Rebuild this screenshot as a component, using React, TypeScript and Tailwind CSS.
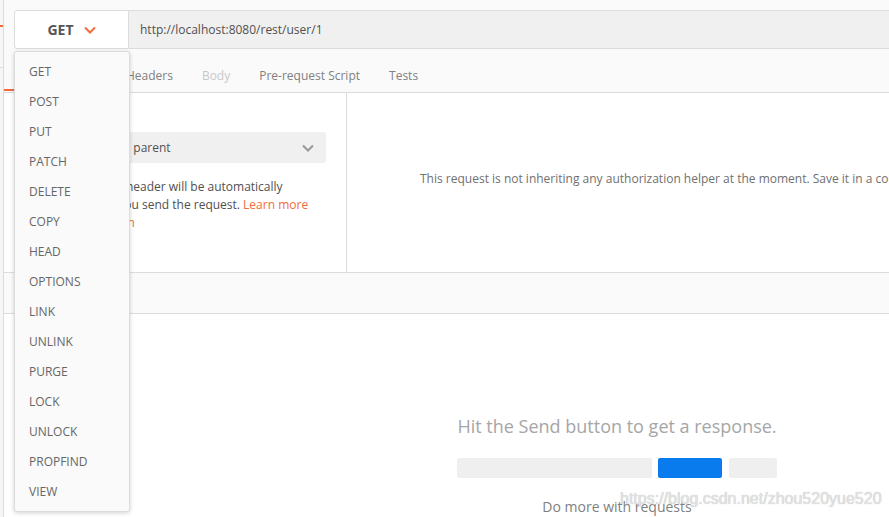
import React from "react";

const methods = [
  "GET",
  "POST",
  "PUT",
  "PATCH",
  "DELETE",
  "COPY",
  "HEAD",
  "OPTIONS",
  "LINK",
  "UNLINK",
  "PURGE",
  "LOCK",
  "UNLOCK",
  "PROPFIND",
  "VIEW",
];

function Chevron({ className = "" }: { className?: string }) {
  return (
    <svg className={className} viewBox="0 0 12 8" fill="none" stroke="currentColor" strokeWidth={2}>
      <path d="M1 1.5l5 5 5-5" />
    </svg>
  );
}

export default function App() {
  return (
    <div
      className="relative w-[889px] h-[517px] overflow-hidden bg-white flex text-[12px]"
      style={{ fontFamily: '"Open Sans", "Liberation Sans", sans-serif' }}
    >
      {/* left sidebar edge */}
      <div className="w-[4px] shrink-0 bg-[#f6f6f6] border-r border-[#dcdcdc] flex flex-col">
        <div className="mt-[25px] h-[2px] w-[3px] bg-[#f26b3a]" />
        <div className="mt-[40px] h-px w-[3px] bg-[#e0e0e0]" />
      </div>

      {/* main column */}
      <div className="flex-1 flex flex-col min-w-0">
        {/* url bar */}
        <div className="shrink-0 bg-[#fafafa] pt-[10px] pl-[10px] flex">
          <div className="w-[115px] h-[39px] shrink-0 bg-white border border-[#dcdcdc] rounded-l-[3px] flex items-center justify-center gap-[10px]">
            <span className="text-[14px] font-bold text-[#555]">GET</span>
            <Chevron className="w-[12px] h-[8px] text-[#f26b3a]" />
          </div>
          <div className="flex-1 h-[39px] bg-[#f0f0f0] border-y border-[#dcdcdc] flex items-center pl-[11px] text-[12px] text-[#505050] whitespace-nowrap">
            http://localhost:8080/rest/user/1
          </div>
        </div>

        {/* tabs */}
        <div className="shrink-0 h-[44px] pt-[10px] bg-[#fafafa] border-b border-[#dcdcdc] flex items-stretch pl-[10px] gap-[29px] text-[12px] text-[#808080] whitespace-nowrap">
          <div className="relative flex items-center -ml-[10px] pl-[10px] pr-[7px]">
            <span className="text-[#505050]">Authorization</span>
            <div className="absolute left-0 right-0 bottom-[1px] h-[2px] bg-[#f26b3a]" />
          </div>
          <div className="flex items-center">Headers</div>
          <div className="flex items-center text-[#c8c8c8]">Body</div>
          <div className="flex items-center">Pre-request Script</div>
          <div className="flex items-center">Tests</div>
        </div>

        {/* auth panel */}
        <div className="shrink-0 h-[180px] flex border-b border-[#dcdcdc]">
          <div className="w-[343px] shrink-0 border-r border-[#dcdcdc] px-[20px] pt-[14px]">
            <div className="text-[11px] text-[#808080] h-[25px]">TYPE</div>
            <div className="h-[31px] bg-[#f0f0f0] rounded-[3px] flex items-center justify-between pl-[10px] pr-[12px] text-[#505050]">
              <span>Inherit auth from parent</span>
              <Chevron className="w-[12px] h-[8px] text-[#999]" />
            </div>
            <p className="mt-[15px] leading-[18px] text-[#505050] whitespace-nowrap">
              The authorization header will be automatically
              <br />
              generated when you send the request. <span className="text-[#f26b3a]">Learn more</span>
              <br />
              <span className="text-[#f26b3a]">about authorization</span>
            </p>
          </div>
          <div className="flex-1 flex items-center pl-[73px] pb-[8px] text-[#707070] whitespace-nowrap overflow-hidden">
            This request is not inheriting any authorization helper at the moment. Save it in a collection to use the parent's authorization helper.
          </div>
        </div>

        {/* response header */}
        <div className="shrink-0 h-[41px] bg-[#fafafa] border-b border-[#dcdcdc]" />

        {/* response body */}
        <div className="flex-1 pl-[453px] pt-[99px]">
          <div className="w-[320px] flex flex-col items-center">
            <div className="text-[18px] leading-[26px] text-[#a6a6a6] whitespace-nowrap">
              Hit the Send button to get a response.
            </div>
            <div className="mt-[19px] flex w-full">
              <div className="w-[195px] h-[20px] rounded-[2px] bg-[#efefef]" />
              <div className="ml-[6px] w-[64px] h-[20px] rounded-[2px] bg-[#097bed]" />
              <div className="ml-[7px] w-[48px] h-[20px] rounded-[2px] bg-[#efefef]" />
            </div>
            <div className="mt-[18px] text-[14px] text-[#808080] whitespace-nowrap">Do more with requests</div>
          </div>
        </div>
      </div>

      {/* method dropdown */}
      <div className="absolute left-[14px] top-[51px] w-[116px] bg-[#fafafa] border border-[#dcdcdc] rounded-[3px] shadow-[0_1px_4px_rgba(0,0,0,0.18)] pt-[5px] pb-[4px]">
        {methods.map((m) => (
          <div key={m} className="h-[30px] flex items-center pl-[14px] text-[12px] text-[#666]">
            {m}
          </div>
        ))}
      </div>

      {/* watermark */}
      <div
        className="absolute left-[620px] top-[487px] text-[16px] text-[#e2e2e2] whitespace-nowrap"
        style={{ fontFamily: '"Liberation Sans", Arial, sans-serif', textShadow: "0 0 1px #bbb" }}
      >
        https://blog.csdn.net/zhou520yue520
      </div>
    </div>
  );
}
